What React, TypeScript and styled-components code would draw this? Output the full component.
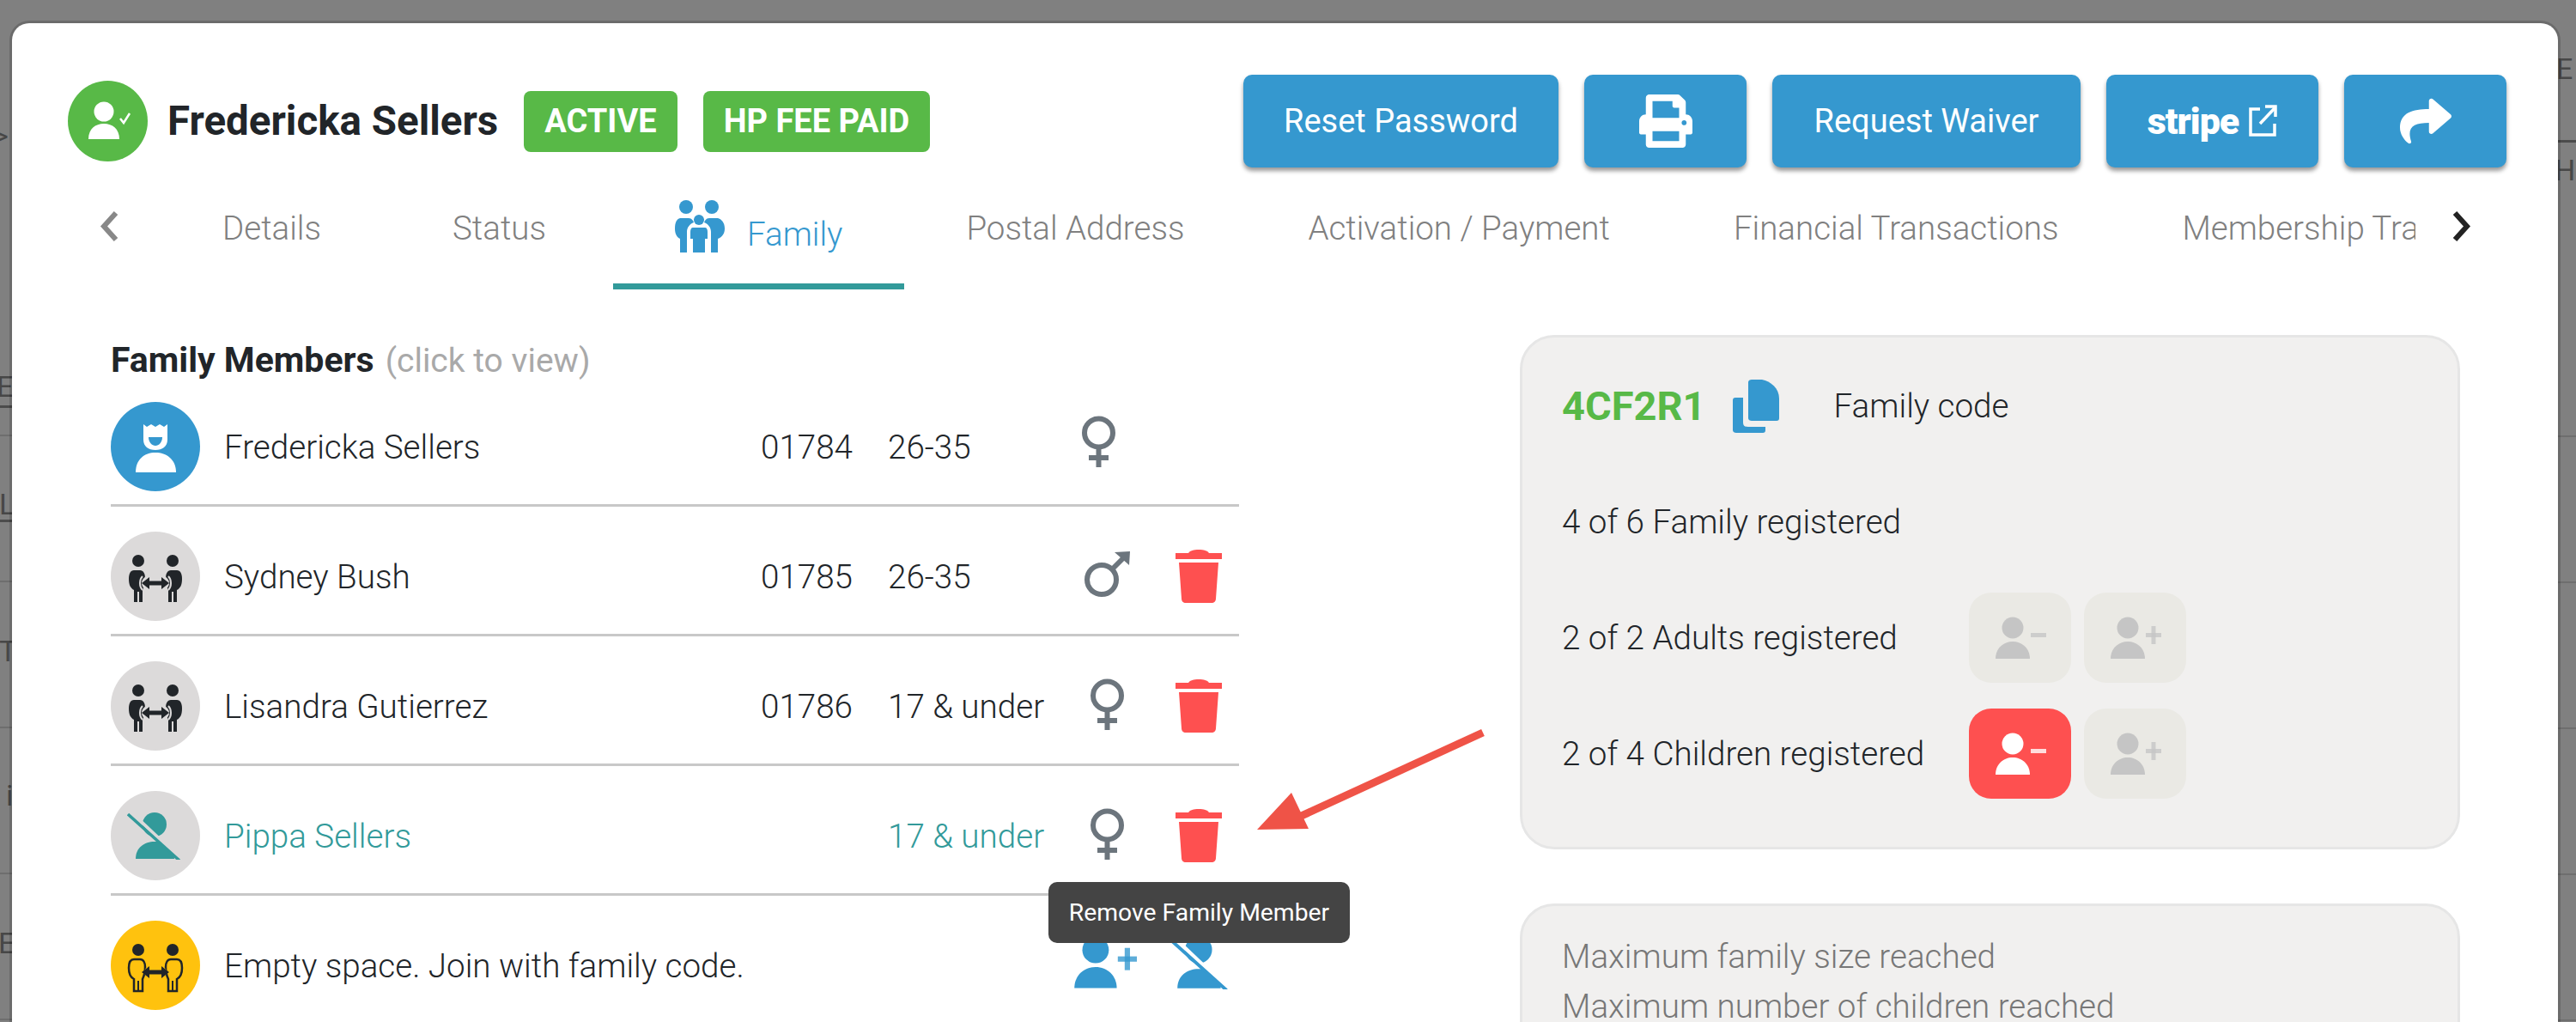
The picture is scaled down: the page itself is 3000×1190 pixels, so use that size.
import { FC } from 'react';
import styled, { createGlobalStyle } from 'styled-components';
import { FaPrint, FaShare } from 'react-icons/fa';

const BLUE = '#3598cf';
const GREEN = '#58b947';
const TEAL = '#329a9a';
const RED = '#fe5050';
const GENDER = '#6c757d';
const AVATAR_GREY = '#dcdada';
const INK = '#212529';

const GlobalStyle = createGlobalStyle`
  html, body {
    margin: 0;
    padding: 0;
    background: #808080;
  }
  body {
    font-family: Roboto, "Liberation Sans", sans-serif;
    font-weight: 300;
    color: ${INK};
  }
  * {
    box-sizing: border-box;
  }
`;

const Page = styled.div`
  position: relative;
  width: 3000px;
  height: 1190px;
  overflow: hidden;
`;

// the table behind the dialog, only its edges are visible
const Backdrop = styled.div`
  display: flex;
  justify-content: space-between;
  height: 1190px;
`;

const Strip = styled.div<{ $width: number }>`
  width: ${p => p.$width}px;
  overflow: hidden;
  display: flex;
  flex-direction: column;
`;

const BackRow = styled.div<{ $height: number; $line?: 'dark' | 'light' }>`
  height: ${p => p.$height}px;
  flex: none;
  display: flex;
  align-items: flex-end;
  white-space: nowrap;
  border-bottom: ${p => (p.$line === 'dark' ? '3px solid #4c4c4c' : p.$line === 'light' ? '2px solid #6e6e6e' : 'none')};
`;

const BackGlyph = styled.span<{ $left?: number; $lift?: number }>`
  margin-left: ${p => p.$left || 0}px;
  margin-bottom: ${p => p.$lift || 0}px;
  font-size: 34px;
  line-height: 34px;
  font-weight: 400;
  color: #474747;
`;

const Modal = styled.div`
  position: absolute;
  left: 14px;
  top: 27px;
  width: 2965px;
  height: 1300px;
  background: #fff;
  border-radius: 20px;
  box-shadow: 0 0 0 3px rgba(0, 0, 0, 0.16);
`;

const Header = styled.div`
  display: flex;
  align-items: center;
  height: 108px;
  margin-top: 60px;
  padding: 0 60px 0 65px;
`;

const HeaderAvatar = styled.div`
  width: 93px;
  height: 94px;
  margin-right: 23px;
  flex: none;
  border-radius: 50%;
  background: ${GREEN};
  svg {
    display: block;
  }
`;

const Name = styled.h1`
  margin: 0 30px 0 0;
  font-size: 47.5px;
  font-weight: 700;
  white-space: nowrap;
`;

const Badge = styled.span`
  display: flex;
  align-items: center;
  height: 71px;
  margin-right: 30px;
  padding: 0 24px;
  border-radius: 8px;
  background: ${GREEN};
  color: #fff;
  font-size: 38px;
  font-weight: 700;
  white-space: nowrap;
`;

const Actions = styled.div`
  display: flex;
  gap: 30px;
  margin-left: auto;
`;

const ActionButton = styled.button<{ $width: number }>`
  display: flex;
  align-items: center;
  justify-content: center;
  gap: 11px;
  width: ${p => p.$width}px;
  height: 108px;
  padding: 0;
  border: 0;
  border-radius: 10px;
  background: ${BLUE};
  box-shadow: 0 4px 5px rgba(0, 0, 0, 0.4);
  color: #fff;
  font-family: inherit;
  font-size: 38px;
  font-weight: 400;
  white-space: nowrap;
`;

const StripeWord = styled.span`
  font-size: 43px;
  font-weight: 900;
  letter-spacing: -1px;
`;

const TabBar = styled.div`
  display: flex;
  align-items: stretch;
  height: 142px;
  padding-left: 102px;
`;

const Chevron = styled.div<{ $width: number; $inset?: number }>`
  width: ${p => p.$width}px;
  flex: none;
  padding: 51px 0 0 ${p => p.$inset || 0}px;
`;

const TabViewport = styled.div`
  width: 2629px;
  flex: none;
  display: flex;
  overflow: hidden;
`;

const Tab = styled.div<{ $min?: number; $active?: boolean }>`
  flex: none;
  display: flex;
  justify-content: center;
  align-items: ${p => (p.$active ? 'flex-end' : 'flex-start')};
  gap: 26px;
  min-width: ${p => p.$min || 0}px;
  padding: ${p => (p.$active ? '0 72px 36px' : '50px 72px 0')};
  border-bottom: 7px solid ${p => (p.$active ? TEAL : 'transparent')};
  color: ${p => (p.$active ? BLUE : '#808080')};
  font-size: 38.5px;
  line-height: 42px;
  white-space: nowrap;
`;

const Body = styled.div`
  display: flex;
  align-items: flex-start;
  padding: 53px 0 0 115px;
`;

const Members = styled.div`
  width: 1314px;
  flex: none;
  margin-right: 327px;
`;

const Heading = styled.div`
  height: 78px;
  padding-top: 7px;
  font-size: 41px;
  line-height: 44px;
  font-weight: 700;
  white-space: nowrap;
  small {
    margin-left: 13px;
    font-size: 39px;
    font-weight: 400;
    color: #a9a9a9;
  }
`;

const MemberRow = styled.div<{ $first?: boolean; $last?: boolean; $teal?: boolean }>`
  display: grid;
  grid-template-columns: 132px 625px 148px 225px 110px 1fr;
  align-items: center;
  padding: ${p => (p.$first ? '0' : '29px')} 0 15px;
  border-bottom: ${p => (p.$last ? '0' : '3px solid #c8c8c8')};
  color: ${p => (p.$teal ? TEAL : 'inherit')};
  font-size: 38.6px;
  white-space: nowrap;
`;

const Avatar = styled.div<{ $bg: string }>`
  display: flex;
  align-items: center;
  justify-content: center;
  width: 104px;
  height: 104px;
  border-radius: 50%;
  background: ${p => p.$bg};
  svg {
    display: block;
  }
`;

const GenderCell = styled.div<{ $lead?: boolean }>`
  display: flex;
  justify-content: center;
  width: 60px;
  margin: ${p => (p.$lead ? '0 0 12px -10px' : '0 0 4px 0')};
  svg {
    display: block;
  }
`;

const TrashCell = styled.div`
  position: relative;
  width: 54px;
  height: 62px;
  svg {
    display: block;
  }
`;

const Tooltip = styled.div`
  position: absolute;
  z-index: 2;
  left: -148px;
  top: 85px;
  width: 351px;
  height: 71px;
  display: flex;
  align-items: center;
  justify-content: center;
  border-radius: 10px;
  background: #444;
  color: #fff;
  font-size: 28.3px;
  font-weight: 400;
  white-space: nowrap;
`;

const EmptyActions = styled.div`
  grid-column: 3 / -1;
  display: flex;
  gap: 36px;
  justify-content: flex-end;
  margin: 0 9px 6px 0;
  svg {
    display: block;
  }
`;

const EmptyText = styled.span`
  white-space: nowrap;
`;

const Side = styled.div`
  width: 1095px;
  flex: none;
`;

const Panel = styled.div<{ $notes?: boolean }>`
  margin-bottom: 63px;
  padding: ${p => (p.$notes ? '30px 46px' : '12px 46px 41px')};
  border: 3px solid #e6e6e6;
  border-radius: 40px;
  background: #f1f0ef;
`;

const PanelRow = styled.div`
  display: flex;
  align-items: center;
  height: 135px;
  font-size: 38.6px;
  white-space: nowrap;
`;

const PanelLabel = styled.div`
  width: 474px;
  flex: none;
`;

const FamilyCode = styled.span`
  margin-right: 31px;
  color: ${GREEN};
  font-size: 47px;
  font-weight: 700;
`;

const CodeCaption = styled.span`
  margin-left: 64px;
`;

const CountButton = styled.div<{ $active?: boolean }>`
  display: flex;
  align-items: center;
  justify-content: center;
  width: 119px;
  height: 105px;
  margin-right: 15px;
  border-radius: 26px;
  background: ${p => (p.$active ? RED : '#eae9e4')};
`;

const Note = styled.div`
  color: #777;
  font-size: 38.6px;
  line-height: 58px;
  white-space: nowrap;
`;

const Callout = styled.svg`
  position: absolute;
  left: 1440px;
  top: 820px;
`;

const Arrowhead: FC<{ color: string; left?: boolean }> = ({ color, left }) => (
  <svg width="23" height="35" viewBox="0 0 23 35" fill="none">
    <polyline
      points={left ? '19,2 5,17.5 19,33' : '4,2 18,17.5 4,33'}
      stroke={color}
      strokeWidth="6"
    />
  </svg>
);

const HeaderPerson: FC = () => (
  <svg width="93" height="94" viewBox="0 0 93 94" fill="#fff">
    <circle cx="42" cy="36" r="11.5" />
    <path d="M24 68 C24 56 32 50 42 50 C52 50 60 56 60 68 Z" />
    <polyline points="61,44 65,49 72,38" fill="none" stroke="#fff" strokeWidth="2.5" />
  </svg>
);

const AdminPerson: FC = () => (
  <svg width="104" height="104" viewBox="0 0 104 104">
    <path
      d="M38 26 L42 29 L47 26 L52 29 L57 26 L62 29 L66 26 V44 C66 52 60 56 52 56 C44 56 38 52 38 44 Z"
      fill="#fff"
    />
    <path d="M44 41 H60 C60 47 56 51 52 51 C48 51 44 47 44 41 Z" fill={BLUE} />
    <path d="M29 82 C29 67 39 59 52 59 C65 59 76 67 76 82 Z" fill="#fff" />
  </svg>
);

const COUPLE_BODY = 'M27 45 H34 C38 45 40 49 40 54 C40 62 38 66 37 68 V82 H27 V68 C23 66 21 62 21 55 C21 49 23 45 27 45 Z';

const Couple: FC<{ outline?: boolean }> = ({ outline }) => {
  const bodyFill = outline ? 'none' : INK;
  const bodyStroke = outline ? 2.5 : 0;
  const slit = outline ? INK : AVATAR_GREY;

  return (
    <svg width="104" height="104" viewBox="0 0 104 104" fill={INK}>
      <circle cx="32" cy="34" r="7" />
      <circle cx="72" cy="34" r="7" />
      <path d={COUPLE_BODY} fill={bodyFill} stroke={INK} strokeWidth={bodyStroke} />
      <path d={COUPLE_BODY} fill={bodyFill} stroke={INK} strokeWidth={bodyStroke} transform="matrix(-1 0 0 1 104 0)" />
      <line x1="32" y1="70" x2="32" y2="82" stroke={slit} strokeWidth="2" />
      <line x1="72" y1="70" x2="72" y2="82" stroke={slit} strokeWidth="2" />
      {outline ? (
        <ellipse cx="52" cy="60" rx="13" ry="9" fill="#ffc20e" />
      ) : (
        <>
          <ellipse cx="52" cy="60" rx="16" ry="11" fill={AVATAR_GREY} />
          <path d="M37 52 C33 56 33 64 37 68" fill="none" stroke={AVATAR_GREY} strokeWidth="2" />
          <path d="M67 52 C71 56 71 64 67 68" fill="none" stroke={AVATAR_GREY} strokeWidth="2" />
        </>
      )}
      <rect x="41" y="57.5" width="22" height="5" />
      <polygon points="36,60 45,53 45,67" />
      <polygon points="68,60 59,53 59,67" />
    </svg>
  );
};

const NoPerson: FC<{ color: string; width: number; height: number; gap: string }> = ({ color, width, height, gap }) => (
  <svg width={width} height={height} viewBox="19 27 66 55">
    <circle cx="51" cy="41" r="14" fill={color} />
    <path d="M29 81 C29 68 39 61 51 61 C63 61 74 68 74 81 Z" fill={color} />
    <line x1="24" y1="27" x2="82" y2="82" stroke={gap} strokeWidth="4" />
    <line x1="20" y1="29" x2="80" y2="83" stroke={color} strokeWidth="3.5" />
  </svg>
);

const FamilyGlyph: FC = () => (
  <svg width="58" height="62" viewBox="0 0 58 62" fill={BLUE}>
    <circle cx="13" cy="9" r="8" />
    <circle cx="43" cy="9" r="8" />
    <circle cx="28" cy="24" r="6" />
    <path d="M6 22 H16 C19 22 21 24 22 27 C17 29 14 33 14 38 V62 H6 V46 C2 44 0 40 0 34 C0 27 2 23 6 22 Z" />
    <path d="M50 22 H40 C37 22 35 24 34 27 C39 29 42 33 42 38 V62 H50 V46 C55 44 58 40 58 34 C58 27 54 23 50 22 Z" />
    <path d="M21 33 H35 C37 33 38 35 38 38 V46 H35 V62 H21 V46 H18 V38 C18 35 19 33 21 33 Z" />
  </svg>
);

const Female: FC = () => (
  <svg width="41" height="60" viewBox="0 0 41 60" fill="none" stroke={GENDER} strokeWidth="6">
    <circle cx="20.5" cy="20" r="16.5" />
    <line x1="20.5" y1="36" x2="20.5" y2="60" />
    <line x1="9" y1="49" x2="32" y2="49" />
  </svg>
);

const Male: FC = () => (
  <svg width="54" height="54" viewBox="0 0 54 54" fill="none" stroke={GENDER} strokeWidth="6">
    <circle cx="21" cy="33" r="17" />
    <line x1="33" y1="21" x2="48" y2="6" />
    <polygon points="36,1 54,0 53,16" fill={GENDER} stroke="none" />
  </svg>
);

const Trash: FC = () => (
  <svg width="54" height="62" viewBox="0 0 54 62" fill={RED}>
    <path d="M0 4 H15 C17 1 21 0 27 0 C33 0 37 1 39 4 H54 V11 H0 Z" />
    <path d="M4 15 H50 L47 57 C47 60 45 62 42 62 H12 C9 62 7 60 7 57 Z" />
  </svg>
);

const PersonAdjust: FC<{ color: string; plus?: boolean; width?: number; height?: number }> = ({
  color,
  plus,
  width = 60,
  height = 50
}) => (
  <svg width={width} height={height} viewBox="0 0 60 50" fill={color}>
    <circle cx="21" cy="13" r="12.5" />
    <path d="M1 49 C1 37 10 29 21 29 C32 29 41 37 41 49 Z" />
    <rect x="42" y="19" width="18" height="5" opacity="0.8" />
    {plus && <rect x="48.5" y="11" width="5" height="21" opacity="0.8" />}
  </svg>
);

const CopyGlyph: FC = () => (
  <svg width="54" height="62" viewBox="0 0 54 62" fill={BLUE}>
    <path d="M3 21 H12 V50 C12 54 14 55 18 55 H38 V59 C38 61 37 62 35 62 H4 C2 62 0 61 0 59 V24 C0 22 1 21 3 21 Z" />
    <path d="M22 0 H34 C44 2 54 10 54 22 V45 C54 47 53 48 51 48 H22 C20 48 18 47 18 45 V3 C18 1 20 0 22 0 Z" />
  </svg>
);

const ExternalGlyph: FC = () => (
  <svg width="34" height="38" viewBox="0 0 34 38" fill="none" stroke="#fff" strokeWidth="3.5">
    <path d="M14 5 H3 V35 H31 V22" />
    <path d="M14 22 L31 4" />
    <polyline points="20,2 32,2 32,14" />
  </svg>
);

const leftRows = [
  { height: 175, text: '>', left: -8 },
  { height: 300, text: 'Er', left: -4, lift: 5, line: 'dark' as const },
  { height: 33, line: 'light' as const },
  { height: 100, text: 'L', left: -1, lift: 1, line: 'dark' as const },
  { height: 70, line: 'light' as const },
  { height: 170, text: 'T', left: -1, lift: 71, line: 'light' as const },
  { height: 170, text: 'i', left: 7, lift: 73, line: 'light' as const },
  { height: 170, text: 'E', left: -2, lift: 71, line: 'light' as const }
];

const rightRows = [
  { height: 100, text: 'E', left: -2, lift: 3 },
  { height: 66, line: 'dark' as const },
  { height: 52, text: 'H', left: -4, lift: 3 },
  { height: 291, line: 'light' as const },
  { height: 170, line: 'light' as const },
  { height: 170, line: 'light' as const },
  { height: 170, line: 'light' as const },
  { height: 170, line: 'light' as const }
];

const App: FC = () => {
  const strips = [
    { width: 14, rows: leftRows },
    { width: 21, rows: rightRows }
  ];

  return (
    <Page>
      <GlobalStyle />
      <Backdrop>
        {strips.map(strip => (
          <Strip key={strip.width} $width={strip.width}>
            {strip.rows.map((row, index) => (
              <BackRow key={index} $height={row.height} $line={row.line}>
                {row.text && (
                  <BackGlyph $left={row.left} $lift={row.lift}>
                    {row.text}
                  </BackGlyph>
                )}
              </BackRow>
            ))}
          </Strip>
        ))}
      </Backdrop>

      <Modal>
        <Header>
          <HeaderAvatar>
            <HeaderPerson />
          </HeaderAvatar>
          <Name>Fredericka Sellers</Name>
          <Badge>ACTIVE</Badge>
          <Badge>HP FEE PAID</Badge>
          <Actions>
            <ActionButton $width={367}>Reset Password</ActionButton>
            <ActionButton $width={189}>
              <FaPrint size={62} />
            </ActionButton>
            <ActionButton $width={359}>Request Waiver</ActionButton>
            <ActionButton $width={247}>
              <StripeWord>stripe</StripeWord>
              <ExternalGlyph />
            </ActionButton>
            <ActionButton $width={189}>
              <FaShare size={60} />
            </ActionButton>
          </Actions>
        </Header>

        <TabBar>
          <Chevron $width={68}>
            <Arrowhead color="#888" left />
          </Chevron>
          <TabViewport>
            <Tab $min={265}>Details</Tab>
            <Tab $min={265}>Status</Tab>
            <Tab $active>
              <FamilyGlyph />
              Family
            </Tab>
            <Tab>Postal Address</Tab>
            <Tab>Activation / Payment</Tab>
            <Tab>Financial Transactions</Tab>
            <Tab>Membership Transactions</Tab>
          </TabViewport>
          <Chevron $width={70} $inset={42}>
            <Arrowhead color="#222" />
          </Chevron>
        </TabBar>

        <Body>
          <Members>
            <Heading>
              Family Members<small>(click to view)</small>
            </Heading>

            <MemberRow $first>
              <Avatar $bg={BLUE}>
                <AdminPerson />
              </Avatar>
              <span>Fredericka Sellers</span>
              <span>01784</span>
              <span>26-35</span>
              <GenderCell $lead>
                <Female />
              </GenderCell>
            </MemberRow>

            <MemberRow>
              <Avatar $bg={AVATAR_GREY}>
                <Couple />
              </Avatar>
              <span>Sydney Bush</span>
              <span>01785</span>
              <span>26-35</span>
              <GenderCell>
                <Male />
              </GenderCell>
              <TrashCell>
                <Trash />
              </TrashCell>
            </MemberRow>

            <MemberRow>
              <Avatar $bg={AVATAR_GREY}>
                <Couple />
              </Avatar>
              <span>Lisandra Gutierrez</span>
              <span>01786</span>
              <span>17 &amp; under</span>
              <GenderCell>
                <Female />
              </GenderCell>
              <TrashCell>
                <Trash />
              </TrashCell>
            </MemberRow>

            <MemberRow $teal>
              <Avatar $bg={AVATAR_GREY}>
                <NoPerson color={TEAL} width={66} height={55} gap={AVATAR_GREY} />
              </Avatar>
              <span>Pippa Sellers</span>
              <span />
              <span>17 &amp; under</span>
              <GenderCell>
                <Female />
              </GenderCell>
              <TrashCell>
                <Trash />
                <Tooltip>Remove Family Member</Tooltip>
              </TrashCell>
            </MemberRow>

            <MemberRow $last>
              <Avatar $bg="#ffc20e">
                <Couple outline />
              </Avatar>
              <EmptyText>Empty space. Join with family code.</EmptyText>
              <EmptyActions>
                <PersonAdjust color={BLUE} plus width={74} height={62} />
                <NoPerson color={BLUE} width={74} height={62} gap="#fff" />
              </EmptyActions>
            </MemberRow>
          </Members>

          <Side>
            <Panel>
              <PanelRow>
                <FamilyCode>4CF2R1</FamilyCode>
                <CopyGlyph />
                <CodeCaption>Family code</CodeCaption>
              </PanelRow>
              <PanelRow>
                <PanelLabel>4 of 6 Family registered</PanelLabel>
              </PanelRow>
              <PanelRow>
                <PanelLabel>2 of 2 Adults registered</PanelLabel>
                <CountButton>
                  <PersonAdjust color="#c5c5c5" />
                </CountButton>
                <CountButton>
                  <PersonAdjust color="#c5c5c5" plus />
                </CountButton>
              </PanelRow>
              <PanelRow>
                <PanelLabel>2 of 4 Children registered</PanelLabel>
                <CountButton $active>
                  <PersonAdjust color="#fff" />
                </CountButton>
                <CountButton>
                  <PersonAdjust color="#c5c5c5" plus />
                </CountButton>
              </PanelRow>
            </Panel>
            <Panel $notes>
              <Note>Maximum family size reached</Note>
              <Note>Maximum number of children reached</Note>
            </Panel>
          </Side>
        </Body>

        <Callout width="300" height="160" viewBox="0 0 300 160">
          <line x1="273" y1="6" x2="55" y2="106" stroke="#ef5347" strokeWidth="9" />
          <polygon points="10,119 50,76 70,118" fill="#ef5347" />
        </Callout>
      </Modal>
    </Page>
  );
};

export default App;
